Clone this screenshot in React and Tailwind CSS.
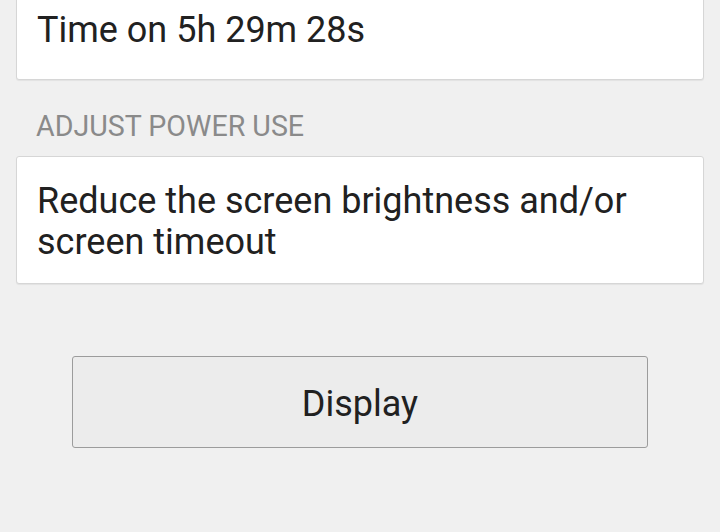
export default function App() {
  return (
    <div className="h-[532px] w-[720px] overflow-hidden bg-[#f0f0f0] font-['Roboto',sans-serif]">
      <div className="px-4">
        <div className="-mt-[20px] flex h-[100px] items-end rounded-[3px] border border-[#d6d6d6] bg-white px-5 pb-[28px] shadow-[0_1px_1px_rgba(0,0,0,0.06)]">
          <p className="text-[36px] leading-[42px] text-[#212121]">Time on 5h 29m 28s</p>
        </div>

        <h2 className="mt-[28px] px-5 text-[28.6px] leading-[36px] text-[#8a8a8a]">ADJUST POWER USE</h2>

        <div className="mt-[12px] rounded-[3px] border border-[#d6d6d6] bg-white px-5 pb-[20px] pt-[24px] shadow-[0_1px_1px_rgba(0,0,0,0.06)]">
          <p className="text-[36px] leading-[41px] text-[#212121]">
            Reduce the screen brightness and/or
            <br />
            screen timeout
          </p>
        </div>
      </div>

      <div className="mt-[72px] flex justify-center">
        <button className="flex h-[92px] w-[576px] items-center justify-center rounded-[3px] border border-[#9c9c9c] bg-[#ececec] pt-[4px] text-[36px] text-[#212121]">
          Display
        </button>
      </div>
    </div>
  );
}
